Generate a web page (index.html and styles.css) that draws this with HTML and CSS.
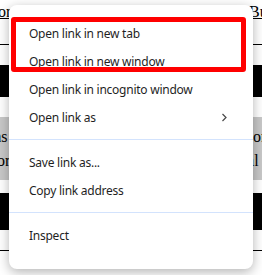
FILE: index.html
```html
<!DOCTYPE html>
<html>
    <head>
        <meta charset="UTF-8">
        <meta name="viewport" content="width=device-width, initial-scale=1.0">
        <title>Context menu</title>
        <link rel="stylesheet" href="styles.css">
    </head>
    <body>
        <div id="page">
            <div class="links">
                <div class="cell"><a class="lnk" id="lnk-left">Color</a></div>
                <div class="cell"><a class="lnk">Buy now</a></div>
            </div>
            <div class="rule"></div>
            <div class="band dark" id="band-one"></div>
            <div class="band grey">
                <div class="cell">
                    <span class="txt" id="t-items">Items</span>
                    <span class="txt" id="t-color">Color</span>
                </div>
                <div class="cell">
                    <span class="txt" id="t-color2">Color</span>
                    <span class="txt" id="t-total">Total</span>
                </div>
            </div>
            <div class="band dark" id="band-two"></div>
            <div class="rule"></div>
        </div>

        <div id="menu">
            <div class="item">Open link in new tab</div>
            <div class="item">Open link in new window</div>
            <div class="item">Open link in incognito window</div>
            <div class="item">
                <span>Open link as</span>
                <svg class="chev" width="6" height="9" viewBox="0 0 6 9">
                    <polyline points="1.5,1 5,4.5 1.5,8" fill="none" stroke="#474747" stroke-width="1.2"/>
                </svg>
            </div>
            <div class="sep"></div>
            <div class="item">Save link as...</div>
            <div class="item">Copy link address</div>
            <div class="sep"></div>
            <div class="item">Inspect</div>
            <div id="mark"></div>
        </div>
    </body>
</html>
```

FILE: styles.css
```css
html, body {
    margin:0;
    padding:0;
}
body {
    width:262px;
    height:275px;
    overflow:hidden;
    background:#fff;
    font-family:"Liberation Serif", serif;
    font-size:16px;
    position:relative;
}
#page {
    display:flex;
    flex-direction:column;
}
.links {
    display:grid;
    grid-template-columns:249px 1fr;
    height:44px;
    padding-top:3px;
    box-sizing:border-box;
}
.cell {
    display:flex;
    flex-direction:column;
    white-space:nowrap;
}
.lnk {
    color:#000;
    text-decoration:underline;
}
#lnk-left {margin-left:-25px;}
.rule {
    height:1px;
    background:#000;
}
.band {
    margin-top:20px;
}
.dark {
    background:#000;
}
#band-one {height:32px;}
#band-two {
    height:37px;
    margin-top:13px;
}
.grey {
    background:#c8c8c8;
    height:63px;
    box-sizing:border-box;
    padding:8px 0 7px;
    display:grid;
    grid-template-columns:226px 1fr;
    line-height:24px;
}
.band + .rule {margin-top:20px;}
#t-items {margin-left:-28px;}
#t-color {margin-left:-26px;}
#t-color2 {margin-left:4px;}

#menu {
    position:absolute;
    left:9px;
    top:5px;
    width:244px;
    height:264px;
    box-sizing:border-box;
    padding:14px 0 20px;
    background:#fff;
    border-radius:8px;
    box-shadow:0 3px 12px rgba(0,0,0,0.3);
    font-family:"Noto Sans", sans-serif;
    font-size:12px;
    letter-spacing:-0.25px;
    color:#1f1f1f;
}
.item {
    height:28px;
    display:flex;
    align-items:center;
    justify-content:space-between;
    padding:0 26px 0 20px;
    white-space:nowrap;
}
.sep {
    height:1px;
    background:#d3e3fd;
    margin:8px 0;
}
#mark {
    position:absolute;
    left:2px;
    top:12px;
    width:235px;
    height:55px;
    box-sizing:border-box;
    border:5px solid #ff0000;
    border-radius:3px;
}
```
